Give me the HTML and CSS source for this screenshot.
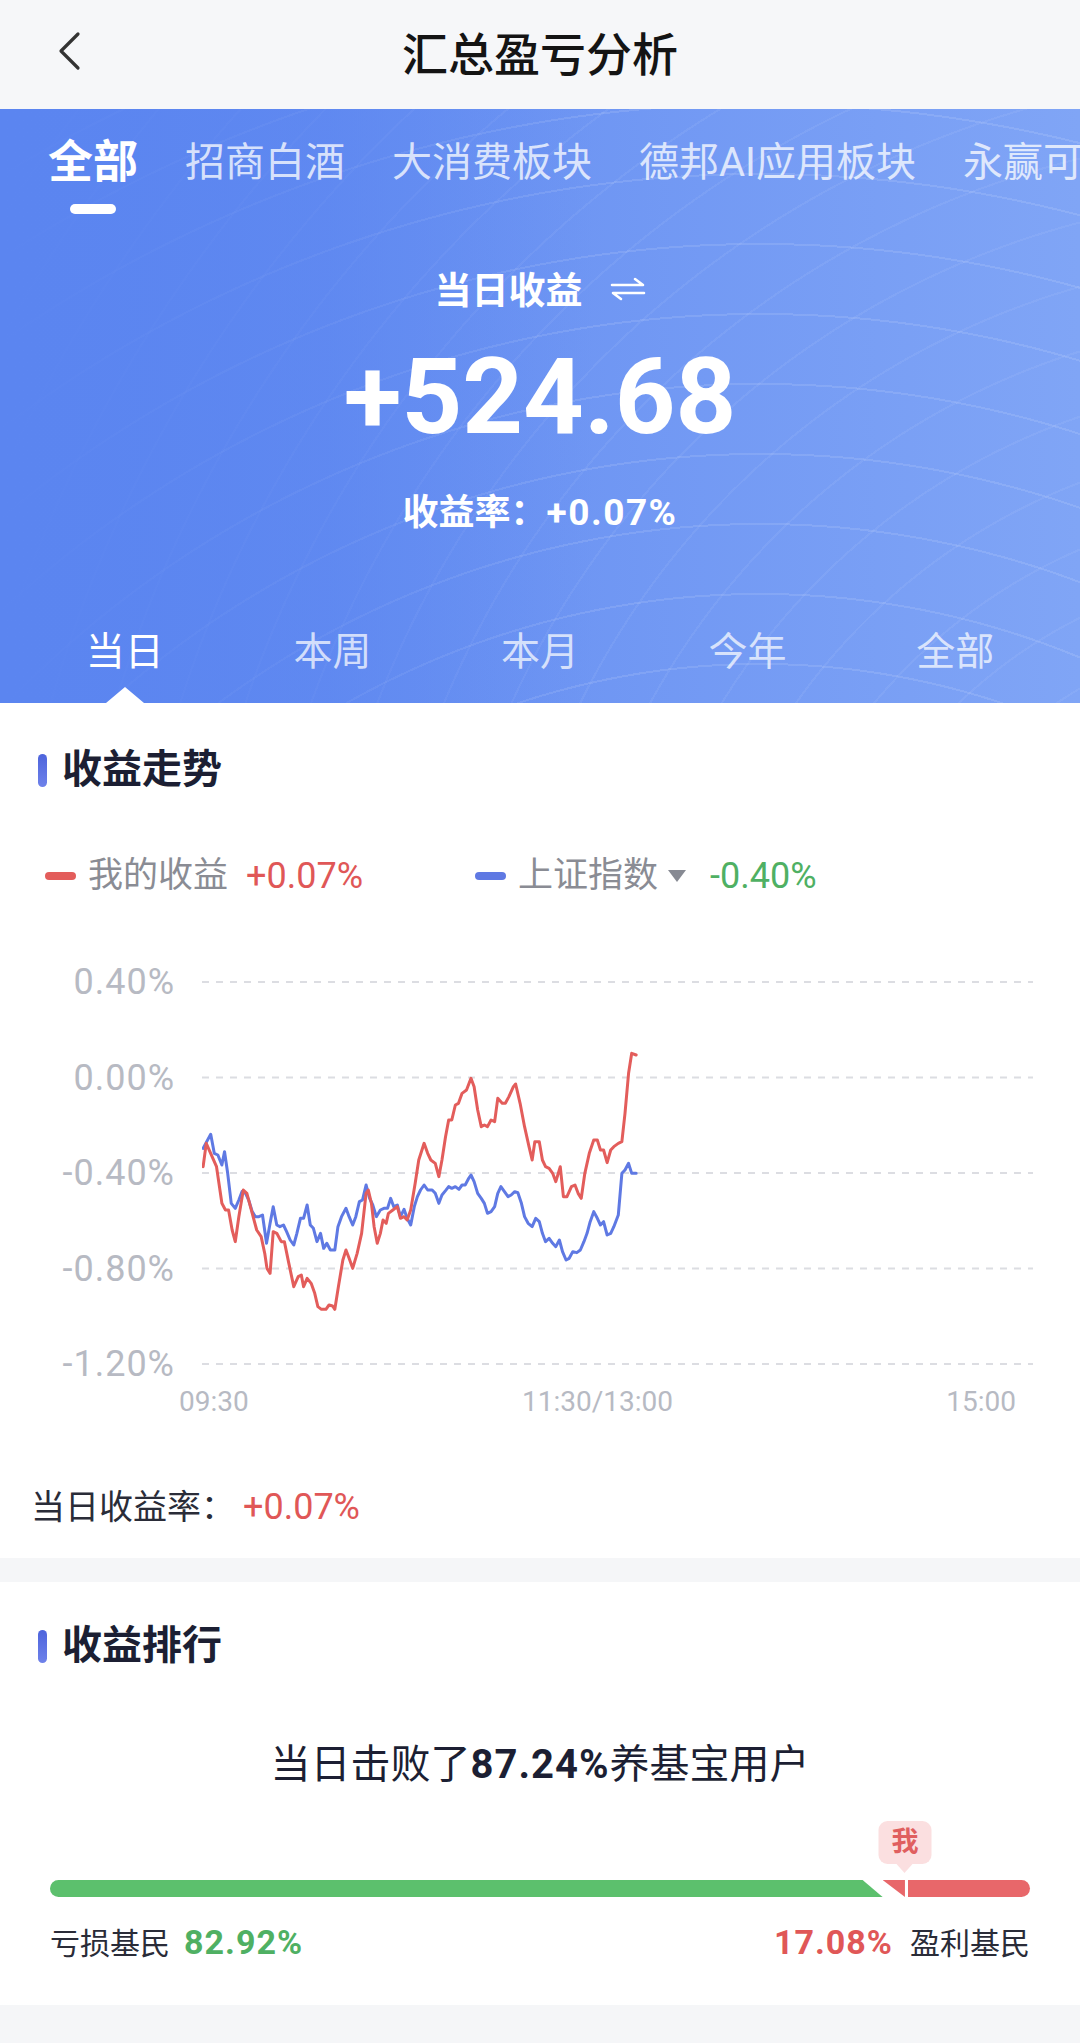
FILE: index.html
```html
<!DOCTYPE html>
<html>
  <head>
    <meta charset="utf-8">
    <title>汇总盈亏分析</title>
    <link rel="stylesheet" href="styles.css">
  </head>
  <body>
    <div class="navbar">
      <div class="back">
        <svg width="26" height="40" viewBox="0 0 26 40"><polyline points="22,3 5,20 22,37" fill="none" stroke="#333" stroke-width="3.2" stroke-linecap="round" stroke-linejoin="round"/></svg>
      </div>
      <h1 class="nav-title">汇总盈亏分析</h1>
      <div></div>
    </div>

    <div class="banner">
      <div class="fund-tabs">
        <div class="fund-tab active">全部</div>
        <div class="fund-tab">招商白酒</div>
        <div class="fund-tab">大消费板块</div>
        <div class="fund-tab">德邦AI应用板块</div>
        <div class="fund-tab">永赢可转债</div>
      </div>
      <div class="profit-label">
        <span>当日收益</span>
        <svg width="36" height="24" viewBox="0 0 36 24"><path d="M2 8H33L25 2M34 16H3L11 22" fill="none" stroke="#fff" stroke-width="2.6" stroke-linecap="round" stroke-linejoin="round"/></svg>
      </div>
      <div class="profit-amount">+524.68</div>
      <div class="profit-rate">收益率：<span class="num">+0.07%</span></div>
      <div class="period-tabs">
        <div class="period-tab active">当日</div>
        <div class="period-tab">本周</div>
        <div class="period-tab">本月</div>
        <div class="period-tab">今年</div>
        <div class="period-tab">全部</div>
      </div>
    </div>

    <div class="card trend-card">
      <div class="section-title">收益走势</div>
      <div class="legend">
        <div class="legend-item">
          <span class="dash red"></span>
          <span class="legend-name">我的收益</span>
          <span class="legend-value up">+0.07%</span>
        </div>
        <div class="legend-item">
          <span class="dash blue"></span>
          <span class="legend-name">上证指数</span>
          <span class="caret"></span>
          <span class="legend-value down">-0.40%</span>
        </div>
      </div>
      <div class="chart">
        <div class="y-axis">
          <span>0.40%</span>
          <span>0.00%</span>
          <span>-0.40%</span>
          <span>-0.80%</span>
          <span>-1.20%</span>
        </div>
        <svg class="plot" width="831" height="422" viewBox="0 0 831 422">
          <g stroke="#dcdde2" stroke-width="2" stroke-dasharray="7 7">
            <line x1="0" y1="20" x2="831" y2="20"/>
            <line x1="0" y1="115.5" x2="831" y2="115.5"/>
            <line x1="0" y1="211" x2="831" y2="211"/>
            <line x1="0" y1="306.5" x2="831" y2="306.5"/>
            <line x1="0" y1="402" x2="831" y2="402"/>
          </g>
          <g transform="translate(-202 -22) scale(0.446429 0.333333)" fill="none" stroke-linejoin="round" stroke-linecap="round">
            <polyline vector-effect="non-scaling-stroke" stroke="#5f79e3" stroke-width="3" points="455,625 463,605 472,583 480,640 488,645 497,675 503,635 510,700 518,790 527,805 535,780 542,755 550,760 557,780 565,815 572,830 580,830 588,825 597,910 605,850 612,800 620,855 627,860 635,855 642,875 650,900 658,915 665,880 673,835 680,835 688,795 695,855 702,865 710,905 718,880 725,925 732,910 740,930 750,930 757,860 765,830 775,805 782,830 790,855 797,830 805,785 812,780 820,735 828,775 835,795 843,830 852,810 860,805 868,805 875,775 882,800 890,795 897,830 905,808 912,835 920,855 928,800 935,770 942,750 950,735 958,750 968,750 975,760 983,790 990,765 998,752 1005,740 1012,745 1020,740 1028,748 1035,735 1042,735 1050,715 1055,705 1062,725 1070,760 1078,775 1085,790 1092,820 1100,815 1108,800 1115,760 1122,740 1130,755 1138,770 1145,765 1153,755 1160,758 1168,790 1175,830 1183,850 1192,860 1200,835 1208,845 1215,880 1222,905 1230,895 1238,910 1245,920 1253,900 1260,935 1268,960 1275,955 1283,935 1292,938 1300,930 1308,905 1315,880 1322,845 1330,815 1338,835 1345,855 1352,845 1360,885 1368,880 1375,860 1385,825 1393,700 1400,690 1408,670 1415,700 1425,700"/>
            <polyline vector-effect="non-scaling-stroke" stroke="#e35d5b" stroke-width="3" points="455,680 462,610 485,680 497,790 505,810 512,810 520,870 527,905 535,830 545,750 553,760 565,820 575,870 585,890 593,940 598,985 605,1000 612,875 620,880 630,905 637,905 647,970 658,1040 668,1010 675,1005 680,1040 688,1015 697,1030 705,1060 712,1100 720,1108 730,1108 737,1095 745,1098 750,1108 758,1040 768,960 775,930 782,955 790,985 800,940 810,880 820,760 825,750 832,790 838,860 845,910 852,880 858,840 865,850 870,820 880,810 890,800 897,835 905,830 912,840 920,810 930,730 938,660 950,610 958,640 965,660 975,670 983,710 990,660 998,590 1005,540 1012,540 1020,495 1027,490 1035,460 1045,450 1055,415 1062,440 1070,510 1078,560 1085,555 1092,560 1100,540 1108,545 1115,475 1125,490 1132,490 1140,470 1150,440 1155,432 1165,490 1175,560 1185,620 1192,660 1198,605 1208,605 1215,660 1222,680 1230,685 1238,700 1245,725 1255,680 1262,770 1270,770 1280,740 1288,735 1295,760 1302,775 1310,700 1320,640 1330,600 1338,600 1345,630 1352,630 1360,668 1368,630 1375,620 1385,610 1393,605 1400,520 1408,400 1415,340 1425,345"/>
          </g>
        </svg>
      </div>
      <div class="x-axis">
        <span>09:30</span>
        <span>11:30/13:00</span>
        <span>15:00</span>
      </div>
      <div class="daily-rate">当日收益率：<span class="num up">+0.07%</span></div>
    </div>

    <div class="card rank-card">
      <div class="section-title">收益排行</div>
      <div class="rank-headline">当日击败了<b class="num">87.24%</b>养基宝用户</div>
      <div class="rank-marker-row">
        <div class="me-bubble" style="margin-left: 87.24%">我</div>
      </div>
      <div class="rank-bar">
        <div class="bar-loss" style="width: calc(82.92% + 20px)"></div>
        <div class="bar-gain-edge" style="width: calc(87.24% - 82.92% - 20px)"></div>
        <div class="bar-gain"></div>
      </div>
      <div class="rank-labels">
        <div>亏损基民<span class="num down">82.92%</span></div>
        <div><span class="num up">17.08%</span>盈利基民</div>
      </div>
    </div>
  </body>
</html>
```

FILE: styles.css
```css
body {
  margin: 0;
  background-color: #f5f6f8;
  font-family: Roboto, "Noto Sans CJK SC", sans-serif;
  color: #1c1f33;
}
.navbar {
  height: 101px;
  padding-bottom: 8px;
  display: grid;
  grid-template-columns: 140px 1fr 140px;
  align-items: center;
  background-color: #f6f7f9;
}
.back {
  padding-left: 56px;
  height: 40px;
}
.nav-title {
  margin: 0;
  text-align: center;
  font-size: 46px;
  font-weight: 500;
  color: #141414;
}
.banner {
  height: 594px;
  display: flex;
  flex-direction: column;
  color: #fff;
  background:
    linear-gradient(90deg, #5b85f0 0%, rgba(91, 133, 240, 0.6) 30%, rgba(91, 133, 240, 0) 55%),
    repeating-radial-gradient(circle at 760px 1323px, transparent 0 67px, rgba(255, 255, 255, 0.11) 67px 69px, transparent 69px 70px),
    repeating-radial-gradient(circle at 1300px 950px, transparent 0 58px, rgba(255, 255, 255, 0.06) 58px 60px, transparent 60px 62px),
    linear-gradient(90deg, #5b85f0, #80a5f6);
}
.fund-tabs {
  display: flex;
  align-items: flex-end;
  gap: 47px;
  margin-top: 26px;
  padding-left: 48px;
  white-space: nowrap;
  overflow: hidden;
  flex: none;
  padding-bottom: 30px;
}
.fund-tab {
  font-size: 40px;
  line-height: 56px;
  color: rgba(255, 255, 255, 0.75);
  position: relative;
}
.fund-tab.active {
  font-size: 45px;
  font-weight: 700;
  color: #fff;
}
.fund-tab.active::after {
  content: "";
  position: absolute;
  left: 50%;
  bottom: -23px;
  width: 46px;
  height: 10px;
  margin-left: -23px;
  border-radius: 5px;
  background: #fff;
}
.profit-label {
  margin-top: 42px;
  height: 50px;
  display: flex;
  align-items: center;
  justify-content: center;
  gap: 27px;
  font-size: 37px;
  font-weight: 700;
}
.profit-label svg {
  margin-top: 2px;
}
.profit-amount {
  margin-top: 24px;
  line-height: 120px;
  text-align: center;
  font-size: 106px;
  font-weight: 700;
}
.profit-rate {
  margin-top: 31px;
  line-height: 50px;
  text-align: center;
  font-size: 36px;
  font-weight: 700;
}
.profit-rate .num {
  font-size: 37px;
  letter-spacing: 1.5px;
}
.period-tabs {
  margin-top: auto;
  display: flex;
  padding: 0 21px;
}
.period-tab {
  flex: 1;
  text-align: center;
  font-size: 39px;
  line-height: 60px;
  padding: 10px 0 21px;
  color: rgba(255, 255, 255, 0.72);
  position: relative;
}
.period-tab.active {
  color: #fff;
}
.period-tab.active::after {
  content: "";
  position: absolute;
  left: 50%;
  bottom: 0;
  margin-left: -19px;
  border-left: 19px solid transparent;
  border-right: 19px solid transparent;
  border-bottom: 16px solid #fff;
}
.card {
  background: #fff;
}
.trend-card {
  padding: 42px 0 29px;
  margin-bottom: 24px;
}
.rank-card {
  padding: 39px 0 41px;
}
.section-title {
  display: flex;
  align-items: center;
  gap: 15px;
  padding-left: 38px;
  line-height: 50px;
  font-size: 40px;
  font-weight: 700;
  color: #1c1f33;
}
.section-title::before {
  content: "";
  width: 9px;
  height: 33px;
  border-radius: 5px;
  background: linear-gradient(#4d64dc, #6f82ea);
}
.legend {
  display: flex;
  margin-top: 58px;
  padding-left: 45px;
  line-height: 46px;
}
.legend-item {
  width: 430px;
  display: flex;
  align-items: center;
}
.dash {
  width: 31px;
  height: 8px;
  border-radius: 4px;
  margin-right: 12px;
}
.dash.red {
  background: #e35d5b;
}
.dash.blue {
  background: #5f79e3;
}
.legend-name {
  font-size: 35px;
  color: #8a8c94;
}
.legend-value {
  font-size: 36px;
  margin-left: 18px;
}
.caret {
  margin-left: 10px;
  border-left: 9px solid transparent;
  border-right: 9px solid transparent;
  border-top: 12px solid #878a93;
}
.caret + .legend-value {
  margin-left: 24px;
}
.up {
  color: #e05757;
}
.down {
  color: #4fb063;
}
.chart {
  display: flex;
  margin-top: 63px;
  padding-right: 47px;
}
.y-axis {
  width: 175px;
  display: flex;
  flex-direction: column;
  justify-content: space-between;
  align-items: flex-end;
  font-size: 36px;
  line-height: 40px;
  letter-spacing: 1px;
  color: #b7bac3;
}
.plot {
  display: block;
  margin-left: 27px;
  flex: none;
}
.x-axis {
  display: flex;
  justify-content: space-between;
  padding: 0 64px 0 179px;
  line-height: 36px;
  font-size: 28px;
  color: #b7bac3;
}
.daily-rate {
  margin-top: 65px;
  padding-left: 31px;
  line-height: 44px;
  font-size: 34px;
  color: #2a2c38;
}
.daily-rate .num {
  margin-left: 8px;
  font-size: 36px;
}
.rank-headline {
  margin-top: 69px;
  text-align: center;
  line-height: 50px;
  font-size: 40px;
  color: #1c1f33;
}
.rank-headline b {
  font-size: 40px;
  letter-spacing: 1px;
}
.rank-marker-row {
  margin: 31px 50px 0;
  height: 59px;
}
.me-bubble {
  width: 53px;
  height: 43px;
  transform: translateX(-50%);
  border-radius: 9px;
  background: #fbdfe0;
  color: #e05f5f;
  font-size: 27px;
  font-weight: 700;
  line-height: 43px;
  text-align: center;
  position: relative;
}
.me-bubble::after {
  content: "";
  position: absolute;
  left: 50%;
  top: 43px;
  margin-left: -8px;
  border-left: 8px solid transparent;
  border-right: 8px solid transparent;
  border-top: 9px solid #fbdfe0;
}
.rank-bar {
  display: flex;
  height: 17px;
  margin: 0 50px;
}
.bar-loss {
  flex: none;
  background: #5cc06d;
  border-radius: 9px 0 0 9px;
  clip-path: polygon(0 0, calc(100% - 20px) 0, 100% 100%, 0 100%);
}
.bar-gain-edge {
  flex: none;
  background: #e8676a;
  clip-path: polygon(0 0, 100% 0, 100% 100%);
}
.bar-gain {
  flex: 1;
  margin-left: 3px;
  background: #e8676a;
  border-radius: 0 9px 9px 0;
}
.rank-labels {
  display: flex;
  justify-content: space-between;
  margin: 25px 50px 0;
  line-height: 40px;
  font-size: 30px;
  color: #2a2c38;
}
.rank-labels .num {
  font-size: 34px;
  font-weight: 700;
  letter-spacing: 1px;
  margin: 0 14px;
}
.rank-labels div:first-child .num {
  margin-right: 0;
}
.rank-labels div:last-child .num {
  margin-left: 0;
  margin-right: 17px;
}
```
